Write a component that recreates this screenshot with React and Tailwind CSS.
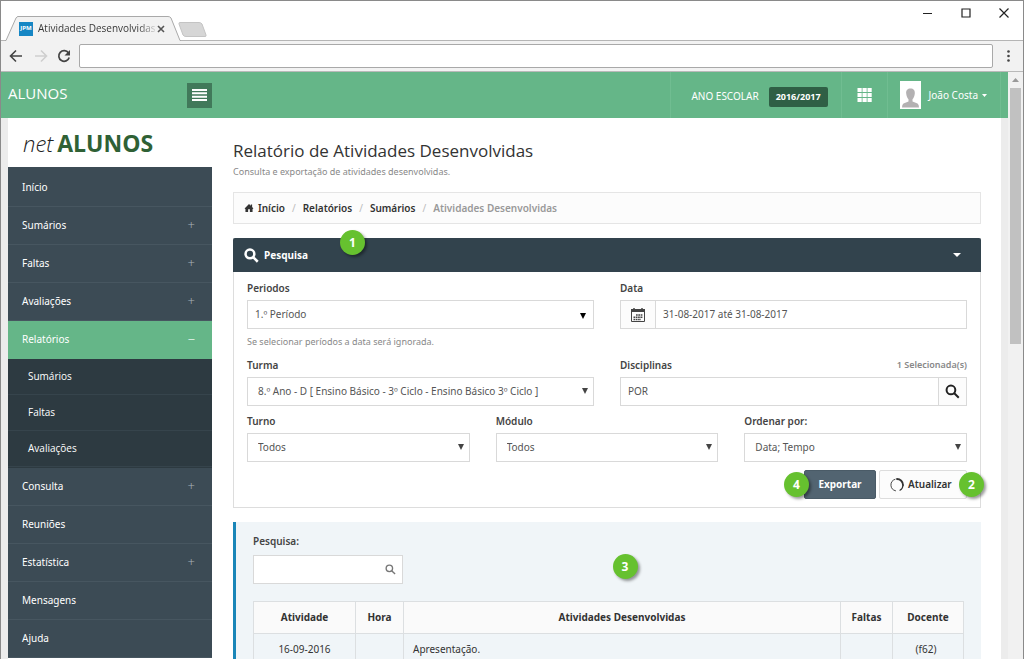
import { useState } from 'react'

const menu = [
  { label: 'Início' },
  { label: 'Sumários', sign: '+' },
  { label: 'Faltas', sign: '+' },
  { label: 'Avaliações', sign: '+' },
  { label: 'Relatórios', sign: '−', active: true, items: ['Sumários', 'Faltas', 'Avaliações'] },
  { label: 'Consulta', sign: '+' },
  { label: 'Reuniões' },
  { label: 'Estatística', sign: '+' },
  { label: 'Mensagens' },
  { label: 'Ajuda' },
]

function SearchIcon({ className, width = 4 }) {
  return (
    <svg viewBox="0 0 24 24" className={className} fill="none" stroke="currentColor" strokeWidth={width}>
      <circle cx="9.5" cy="9.5" r="7" />
      <path d="M14.5 14.5 L22 22" />
    </svg>
  )
}

function Badge({ n, className }) {
  return (
    <span className={`absolute z-10 flex size-[25px] items-center justify-center rounded-full bg-[#66c12f] text-[12px] font-bold text-white shadow-[2px_2px_3px_rgba(0,0,0,0.4)] ${className}`}>
      {n}
    </span>
  )
}

function SelectField({ id, label, options, dark }) {
  return (
    <div>
      <label htmlFor={id} className="block h-5 text-[10px] leading-4 font-semibold text-[#444]">{label}</label>
      <div className="relative">
        <select
          id={id}
          className={`block h-[29px] w-full appearance-none border border-[#d9d9d9] bg-white pr-6 text-[10px] text-[#555] outline-none ${dark ? 'pl-[7px]' : 'pl-[10px]'}`}
        >
          {options.map(o => <option key={o}>{o}</option>)}
        </select>
        <svg
          viewBox="0 0 6 6"
          className={`pointer-events-none absolute size-[6px] ${dark ? 'top-[13px] right-2 text-black' : 'top-[11px] right-[6px] text-[#444]'}`}
        >
          <path d="M0 0 H6 L3 6 Z" fill="currentColor" />
        </svg>
      </div>
    </div>
  )
}

function Browser() {
  return (
    <div className="shrink-0">
      <div className="flex h-10 items-end bg-white">
        <div className="h-px w-1 bg-[#b5b5b5]" />
        <div className="relative h-[25px] w-[176px]">
          <svg viewBox="0 0 176 25" className="absolute inset-0 h-full w-full">
            <path d="M0 24.5 H1 L11 2 Q12 0.5 13 0.5 H163 Q165 0.5 166 2 L175 24.5 H176 V25 H0 Z" fill="#f2f2f2" />
            <path d="M0 24.5 H1 L11 2 Q12 0.5 13 0.5 H163 Q165 0.5 166 2 L175 24.5 H176" fill="none" stroke="#a9a9a9" />
          </svg>
          <div className="relative flex h-full items-center pl-[14px]">
            <span className="flex size-[14px] items-center justify-center bg-[#1686c4] text-[6px] font-bold text-white">JPM</span>
            <span className="ml-[5px] min-w-[114px] bg-gradient-to-r from-[#333] from-85% to-[#ddd] bg-clip-text font-['Open_Sans',sans-serif] text-[10px] whitespace-nowrap text-transparent">
              Atividades Desenvolvidas
            </span>
            <button aria-label="Fechar separador" className="ml-px">
              <svg viewBox="0 0 8 8" className="size-2"><path d="M1 1 L7 7 M7 1 L1 7" stroke="#555" strokeWidth="1.6" /></svg>
            </button>
          </div>
        </div>
        <div className="flex h-[25px] flex-1 flex-col border-b border-[#b5b5b5]">
          <svg viewBox="0 0 30 16" className="mt-[6px] ml-[-3px] h-4 w-[30px]">
            <path d="M2 0.5 H21 Q23 0.5 24 2 L28 13 Q28.500 14.500 27 14.500 H8 Q6 14.500 5 13 L1 2 Q0.500 0.500 2 0.500 Z" fill="#d6d6d6" stroke="#c4c4c4" />
          </svg>
        </div>
        <div className="flex h-10 items-start gap-7 border-b border-[#b5b5b5] pt-[7px] pr-[14px]">
          <button aria-label="Minimizar"><svg viewBox="0 0 10 10" className="size-[10px]"><path d="M0 5.500 H9" stroke="#222" /></svg></button>
          <button aria-label="Maximizar"><svg viewBox="0 0 10 10" className="size-[10px]"><path d="M1 1 H9 V9 H1 Z" fill="none" stroke="#222" strokeWidth="1.200" /></svg></button>
          <button aria-label="Fechar"><svg viewBox="0 0 10 10" className="size-[10px]"><path d="M0.500 0.500 L9.500 9.500 M9.500 0.500 L0.500 9.500" stroke="#222" strokeWidth="1.200" /></svg></button>
        </div>
      </div>
      <div className="flex h-[31px] items-center border-b border-[#b9b9b9] bg-[#f2f2f2] pl-2">
        <button aria-label="Retroceder">
          <svg viewBox="0 0 14 14" className="size-[14px]"><path d="M13 7 H2 M7 1.500 L1.500 7 L7 12.500" fill="none" stroke="#444" strokeWidth="1.600" /></svg>
        </button>
        <button aria-label="Avançar" className="ml-[11px]">
          <svg viewBox="0 0 14 14" className="size-[14px]"><path d="M1 7 H12 M7 1.500 L12.500 7 L7 12.500" fill="none" stroke="#cfcfcf" strokeWidth="1.600" /></svg>
        </button>
        <button aria-label="Atualizar página" className="ml-[9px]">
          <svg viewBox="0 0 14 14" className="size-[14px]">
            <path d="M11.500 4 A5.300 5.300 0 1 0 12.200 8.500" fill="none" stroke="#444" strokeWidth="1.700" />
            <path d="M13 1 V6.500 H7.500 Z" fill="#444" />
          </svg>
        </button>
        <input aria-label="Endereço" className="ml-2 h-6 min-w-0 flex-1 rounded-[2px] border border-[#a9a9a9] bg-white px-2 text-xs outline-none" />
        <button aria-label="Menu" className="mr-[13px] ml-[14px]">
          <svg viewBox="0 0 3 12" className="h-3 w-[3px]" fill="#444">
            <circle cx="1.500" cy="1.500" r="1.300" /><circle cx="1.500" cy="6" r="1.300" /><circle cx="1.500" cy="10.500" r="1.300" />
          </svg>
        </button>
      </div>
    </div>
  )
}

function Header() {
  return (
    <header className="flex h-[46px] shrink-0 items-center bg-[#65b688] pr-[7px] text-white">
      <div className="flex w-[211px] items-center justify-between pl-[7px]">
        <span className="pb-1 font-['Open_Sans',sans-serif] text-[15px]">ALUNOS</span>
        <button aria-label="Mostrar menu" className="flex size-[25px] items-center justify-center bg-[#41795a]">
          <svg viewBox="0 0 15 12" className="h-3 w-[15px]"><path d="M0 1 H15 M0 4.300 H15 M0 7.700 H15 M0 11 H15" stroke="#fff" strokeWidth="2" /></svg>
        </button>
      </div>
      <div className="flex h-full flex-1 items-center justify-end">
        <div className="flex h-full items-center border-l border-[#70bd91] pt-[3px] pr-[13px] pl-[20px]">
          <span className="text-[10px]">ANO ESCOLAR</span>
          <span className="ml-[10px] rounded-[2px] bg-[#2f5f45] px-[7px] text-[9px] leading-5 font-bold">2016/2017</span>
        </div>
        <button aria-label="Aplicações" className="flex h-full w-[47px] items-center justify-center border-x border-[#70bd91]">
          <svg viewBox="0 0 15 14" className="h-[14px] w-[15px]" fill="#fff">
            {[0, 5, 10].map(y => [0, 5, 10].map(x => <rect key={`${x}-${y}`} x={x + 0.5} y={y} width="4.200" height="4" />))}
          </svg>
        </button>
        <button className="flex h-full items-center border-r border-[#70bd91] pr-[13px] pl-3 text-[10px]">
          <svg viewBox="0 0 21 28" className="h-7 w-[21px]">
            <rect width="21" height="28" fill="#fff" />
            <path d="M10.500 7.500 C7.500 7.500 5.800 9.500 6.200 12.500 C6.400 15 7.300 17 8.500 18.200 V20.500 L3.500 22.500 Q2 23.300 2 26.500 H19 Q19 23.300 17.500 22.500 L12.500 20.500 V18.200 C13.700 17 14.600 15 14.800 12.500 C15.200 9.500 13.500 7.500 10.500 7.500 Z" fill="#b3b1b2" />
          </svg>
          <span className="ml-2">João Costa</span>
          <svg viewBox="0 0 5 3" className="ml-1 h-[3px] w-[5px]"><path d="M0 0 H5 L2.500 3 Z" fill="#fff" /></svg>
        </button>
      </div>
    </header>
  )
}

function Sidebar() {
  return (
    <aside className="w-[204px] shrink-0">
      <div className="flex h-[49px] items-baseline bg-white pt-[8px] pl-[15px] font-['Open_Sans',sans-serif] leading-[34px]">
        <span className="text-[22px] font-light text-[#222] italic">net</span>
        <span className="ml-1 text-[23px] font-bold text-[#2f6135]">ALUNOS</span>
      </div>
      <nav className="border-t-2 border-[#3c4b55] text-[10px] text-white">
        {menu.map(m => (
          <div key={m.label}>
            <a
              href="#"
              className={`flex h-[38px] items-center justify-between border-b pr-[17px] pl-[14px] ${m.active ? 'border-[#65b688] bg-[#65b688]' : 'border-[#475660] bg-[#3c4b55]'}`}
            >
              {m.label}
              {m.sign && <span className={`text-[13px] font-light ${m.active ? 'text-white' : 'text-[#a9b3b9]'}`}>{m.sign}</span>}
            </a>
            {m.items && (
              <div className="bg-[#2d3a41] pb-px font-['Open_Sans',sans-serif]">
                {m.items.map(s => (
                  <a key={s} href="#" className="flex h-9 items-center border-b border-[#36444c] pl-5">{s}</a>
                ))}
              </div>
            )}
          </div>
        ))}
      </nav>
    </aside>
  )
}

function Breadcrumb() {
  return (
    <nav className="mt-[13px] flex h-8 shrink-0 items-center gap-[7px] border border-[#e5e5e5] bg-[#fcfcfc] px-[10px] text-[10px] font-semibold text-[#333]">
      <a href="#" className="flex items-center gap-1">
        <svg viewBox="0 0 10 9" className="h-2 w-[10px]"><path d="M5 0 L0 5 L1 5.500 V9 H4 V6 H6 V9 H9 V5.500 L10 5 L8.500 3.500 V0.500 H7 V2 Z" fill="#333" /></svg>
        Início
      </a>
      <span className="font-normal text-[#bbb]">/</span>
      <a href="#">Relatórios</a>
      <span className="font-normal text-[#bbb]">/</span>
      <a href="#">Sumários</a>
      <span className="font-normal text-[#bbb]">/</span>
      <span className="text-[#999]">Atividades Desenvolvidas</span>
    </nav>
  )
}

function Filters() {
  const [range, setRange] = useState('31-08-2017 até 31-08-2017')
  const [subject, setSubject] = useState('POR')

  return (
    <section className="mt-[14px] shrink-0 border border-[#ddd] bg-white">
      <div className="relative -mx-px -mt-px flex h-[34px] items-center rounded-t-[2px] bg-[#32434d] pr-5 pl-[11px] text-white">
        <SearchIcon className="size-[15px]" />
        <h2 className="ml-[5px] flex-1 text-[10px] font-bold">Pesquisa</h2>
        <svg viewBox="0 0 8 4" className="h-1 w-2"><path d="M0 0 H8 L4 4 Z" fill="#fff" /></svg>
        <Badge n="1" className="-top-2 left-[107px]" />
      </div>

      <div className="px-[13px] pt-2 pb-2">
        <div className="grid grid-cols-2 gap-x-[26px]">
          <div>
            <SelectField id="periodos" label="Periodos" options={['1.º Período', '2.º Período', '3.º Período']} dark />
            <p className="pt-[5px] text-[9px] leading-[15px] text-[#888]">Se selecionar períodos a data será ignorada.</p>
          </div>
          <div>
            <label htmlFor="data" className="block h-5 text-[10px] leading-4 font-semibold text-[#444]">Data</label>
            <div className="flex h-[29px] border border-[#d9d9d9]">
              <span className="flex w-[35px] items-center justify-center border-r border-[#d9d9d9] bg-[#fcfcfc]">
                <svg viewBox="0 0 14 14" className="size-[14px]" fill="none" stroke="#444">
                  <path d="M0.500 1.500 H13.500 V13.500 H0.500 Z" />
                  <path d="M0 2.500 H14" strokeWidth="3" />
                  <path d="M3 0 V2 M11 0 V2" strokeWidth="1.500" />
                  <path d="M5 7 H12 M2.500 9.300 H12 M2.500 11.500 H10" strokeWidth="1.500" strokeDasharray="1.700 0.600" />
                </svg>
              </span>
              <input id="data" value={range} onChange={e => setRange(e.target.value)} className="min-w-0 flex-1 px-[7px] text-[10px] text-[#555] outline-none" />
            </div>
          </div>
        </div>

        <div className="mt-2 grid grid-cols-2 gap-x-[26px]">
          <SelectField id="turma" label="Turma" options={['8.º Ano - D [ Ensino Básico - 3º Ciclo - Ensino Básico 3º Ciclo ]']} />
          <div>
            <div className="flex h-5 justify-between leading-4 font-semibold">
              <label htmlFor="disciplinas" className="text-[10px] text-[#444]">Disciplinas</label>
              <span className="text-[9px] text-[#888]">1 Selecionada(s)</span>
            </div>
            <div className="flex h-[29px] border border-[#d9d9d9]">
              <input id="disciplinas" value={subject} onChange={e => setSubject(e.target.value)} className="min-w-0 flex-1 px-[7px] text-[10px] text-[#555] outline-none" />
              <button aria-label="Procurar disciplinas" className="flex w-7 items-center justify-center border-l border-[#d9d9d9] bg-[#fcfcfc] text-[#222]">
                <SearchIcon className="size-[15px]" width={3.2} />
              </button>
            </div>
          </div>
        </div>

        <div className="mt-[7px] grid grid-cols-3 gap-x-[26px]">
          <SelectField id="turno" label="Turno" options={['Todos']} />
          <SelectField id="modulo" label="Módulo" options={['Todos']} />
          <SelectField id="ordenar" label="Ordenar por:" options={['Data; Tempo']} />
        </div>

        <div className="mt-2 flex justify-end gap-[3px] text-[10px]">
          <div className="relative">
            <button className="h-[29px] w-[72px] rounded-[2px] border border-[#4a5b67] bg-[#526471] font-bold text-white">Exportar</button>
            <Badge n="4" className="top-[2px] -left-5" />
          </div>
          <div className="relative">
            <button className="flex h-[29px] w-[88px] items-center gap-1 rounded-[2px] border border-[#ddd] bg-[#fcfcfc] pl-[10px] font-semibold text-[#333]">
              <svg viewBox="0 0 14 14" className="size-[14px]" fill="none" stroke="#333" strokeLinecap="round">
                <path d="M7 1 A6 6 0 0 1 13 7" strokeWidth="1.800" />
                <path d="M13 7 A6 6 0 0 1 10 12.200" strokeWidth="1.200" />
                <path d="M5.500 12.800 A6 6 0 0 1 5 1.300" strokeWidth="0.900" />
              </svg>
              Atualizar
            </button>
            <Badge n="2" className="top-[2px] -right-[17px]" />
          </div>
        </div>
      </div>
    </section>
  )
}

function Results() {
  const [query, setQuery] = useState('')

  return (
    <section className="relative mt-[14px] flex-1 border-l-[3px] border-[#1a86b8] bg-[#f0f5f8] pt-[11px] pr-[17px] pl-[17px]">
      <label htmlFor="pesquisa" className="block text-[10px] leading-4 font-semibold text-[#444]">Pesquisa:</label>
      <div className="mt-[6px] flex h-[29px] w-[150px] items-center border border-[#d9d9d9] bg-white pr-[6px] text-[#777]">
        <input id="pesquisa" value={query} onChange={e => setQuery(e.target.value)} className="min-w-0 flex-1 px-2 text-[10px] outline-none" />
        <SearchIcon className="size-[11px]" width={3} />
      </div>
      <table className="mt-[17px] w-full table-fixed border-collapse text-[10px] text-[#333]">
        <colgroup>
          <col className="w-[102px]" />
          <col className="w-12" />
          <col />
          <col className="w-[52px]" />
          <col className="w-[71px]" />
        </colgroup>
        <thead>
          <tr className="h-8 bg-[#fafafa]">
            {['Atividade', 'Hora', 'Atividades Desenvolvidas', 'Faltas', 'Docente'].map(h => (
              <th key={h} className="border border-[#dcdfe1] font-bold">{h}</th>
            ))}
          </tr>
        </thead>
        <tbody>
          <tr className="h-8 text-center">
            <td className="border border-[#dcdfe1]">16-09-2016</td>
            <td className="border border-[#dcdfe1]" />
            <td className="border border-[#dcdfe1] pl-[9px] text-left">Apresentação.</td>
            <td className="border border-[#dcdfe1]" />
            <td className="border border-[#dcdfe1] pr-1">(f62)</td>
          </tr>
        </tbody>
      </table>
      <Badge n="3" className="top-8 left-[calc(50%+4px)]" />
    </section>
  )
}

export default function App() {
  return (
    <div className="flex h-screen flex-col overflow-hidden border-x border-t border-[#8a8a8a] bg-white font-['Noto_Sans','Open_Sans',sans-serif]">
      <Browser />
      <div className="flex min-h-0 flex-1">
        <div className="flex min-w-0 flex-1 flex-col">
          <Header />
          <div className="flex min-h-0 flex-1 border-r-[7px] border-l-[7px] border-[#ececec]">
            <Sidebar />
            <main className="flex min-w-0 flex-1 flex-col pt-[21px] pr-5 pl-[21px]">
              <h1 className="font-['Open_Sans',sans-serif] text-[17px] leading-6 text-[#333]">Relatório de Atividades Desenvolvidas</h1>
              <p className="pt-px text-[9px] leading-[15px] text-[#888]">Consulta e exportação de atividades desenvolvidas.</p>
              <Breadcrumb />
              <Filters />
              <Results />
            </main>
          </div>
        </div>
        <div className="flex w-[15px] shrink-0 flex-col items-center bg-[#f1f1f1]">
          <svg viewBox="0 0 7 4" className="my-[6px] h-1 w-[7px]"><path d="M0 4 H7 L3.500 0 Z" fill="#999" /></svg>
          <div className="h-[256px] w-[11px] bg-[#c1c1c1]" />
        </div>
      </div>
    </div>
  )
}
